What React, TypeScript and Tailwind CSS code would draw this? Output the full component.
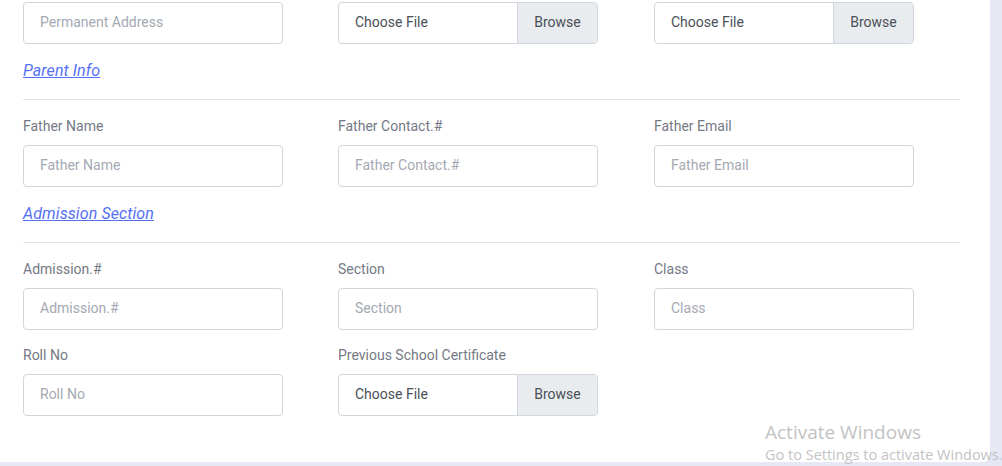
import React from "react";

type Field =
  | { kind: "text"; label?: string; placeholder: string }
  | { kind: "file"; label?: string }
  | { kind: "empty" };

function TextField({ label, placeholder }: { label?: string; placeholder: string }) {
  return (
    <div className="mb-[15px]">
      {label && (
        <label className="block mb-2 text-[14px] leading-[21px] text-[#747985]">
          {label}
        </label>
      )}
      <input
        type="text"
        placeholder={placeholder}
        className="block w-[260px] h-[42px] px-4 pb-[2px] rounded border border-[#d1d5de] bg-white text-[14px] text-[#495057] placeholder:text-[#a4a9b3] outline-none"
      />
    </div>
  );
}

function FileField({ label }: { label?: string }) {
  return (
    <div className="mb-[15px]">
      {label && (
        <label className="block mb-2 text-[14px] leading-[21px] text-[#747985]">
          {label}
        </label>
      )}
      <div className="flex w-[260px] h-[42px] rounded border border-[#d1d5de] bg-white overflow-hidden">
        <span className="flex-1 flex items-center pl-4 pb-[2px] text-[14px] text-[#495057]">
          Choose File
        </span>
        <span className="w-[80px] flex items-center justify-center pb-[2px] border-l border-[#d1d5de] bg-[#e9ecef] text-[14px] text-[#495057]">
          Browse
        </span>
      </div>
    </div>
  );
}

function Row({ fields }: { fields: Field[] }) {
  return (
    <div className="grid grid-cols-[315px_316px_315px]">
      {fields.map((f, i) => (
        <div key={i}>
          {f.kind === "text" && <TextField label={f.label} placeholder={f.placeholder} />}
          {f.kind === "file" && <FileField label={f.label} />}
        </div>
      ))}
    </div>
  );
}

function SectionTitle({ title }: { title: string }) {
  return (
    <>
      <a
        href="#"
        className="block w-fit text-[16px] leading-6 italic underline tracking-[0.1px] text-[#5470f5]"
      >
        {title}
      </a>
      <hr className="w-[937px] mt-4 mb-4 border-0 border-t border-[#e3e4e8]" />
    </>
  );
}

export default function App() {
  return (
    <main
      className="relative h-[466px] w-[1002px] overflow-hidden bg-[#e6e8f3]"
      style={{ fontFamily: "Roboto, 'Liberation Sans', sans-serif" }}
    >
      <div className="w-[990px] h-[462px] bg-white rounded-br-md pl-[23px] pt-[2px]">
        <Row
          fields={[
            { kind: "text", placeholder: "Permanent Address" },
            { kind: "file" },
            { kind: "file" },
          ]}
        />
        <SectionTitle title="Parent Info" />
        <Row
          fields={[
            { kind: "text", label: "Father Name", placeholder: "Father Name" },
            { kind: "text", label: "Father Contact.#", placeholder: "Father Contact.#" },
            { kind: "text", label: "Father Email", placeholder: "Father Email" },
          ]}
        />
        <SectionTitle title="Admission Section" />
        <Row
          fields={[
            { kind: "text", label: "Admission.#", placeholder: "Admission.#" },
            { kind: "text", label: "Section", placeholder: "Section" },
            { kind: "text", label: "Class", placeholder: "Class" },
          ]}
        />
        <Row
          fields={[
            { kind: "text", label: "Roll No", placeholder: "Roll No" },
            { kind: "file", label: "Previous School Certificate" },
            { kind: "empty" },
          ]}
        />
      </div>

      {/* windows watermark overlay */}
      <div
        className="absolute left-[765px] top-[419px] text-[#c3c3c3] pointer-events-none whitespace-nowrap"
        style={{ fontFamily: "'Open Sans', 'Noto Sans', sans-serif" }}
      >
        <div className="text-[19px] leading-[26px]">Activate Windows</div>
        <div className="text-[14.5px] leading-[19px]">Go to Settings to activate Windows.</div>
      </div>
    </main>
  );
}
